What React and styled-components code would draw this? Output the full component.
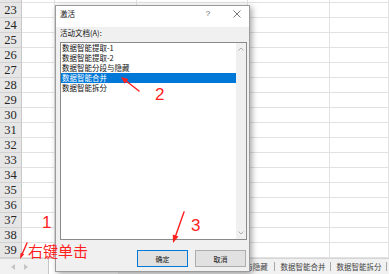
import React from 'react';
import styled, { createGlobalStyle } from 'styled-components';

const GlobalStyle = createGlobalStyle`
    html, body {
        margin: 0;
        padding: 0;
        background: #fff;
    }
    body {
        font-family: "Noto Sans CJK SC", "Noto Sans", sans-serif;
    }
`;

const Page = styled.div`
    position: relative;
    width: 389px;
    height: 274px;
    overflow: hidden;
    display: flex;
    flex-direction: column;
`;

const Sheet = styled.div`
    flex: 1;
    overflow: hidden;
`;

const Rows = styled.div`
    margin-top: -12px;
`;

const Row = styled.div`
    display: grid;
    grid-template-columns: 22px 33px 82px 111px 82px 1fr;
    height: 15px;
`;

const RowHead = styled.div`
    box-sizing: border-box;
    background: #e6e6e6;
    border-right: 1px solid #c9c9c9;
    border-bottom: 1px solid #d2d2d2;
    display: flex;
    align-items: center;
    justify-content: center;
    font: normal 12.5px/14px "Liberation Serif", serif;
    color: #262626;
`;

const Cell = styled.div`
    box-sizing: border-box;
    border-right: 1px solid #e2e2e2;
    border-bottom: 1px solid #e2e2e2;
`;

const TabBar = styled.div`
    height: 16px;
    box-sizing: border-box;
    display: flex;
    background: #f1f1f1;
    border-top: 1px solid #d6d6d6;
`;

const TabNav = styled.div`
    flex: 0 0 48px;
    display: flex;
    align-items: center;
    gap: 9px;
    padding-left: 11px;
    box-sizing: border-box;
`;

const Tab = styled.div`
    position: relative;
    flex: 0 0 ${p => p.$w}px;
    display: flex;
    align-items: center;
    justify-content: center;
    font-size: 7.5px;
    white-space: nowrap;
    overflow: hidden;
    color: ${p => (p.$active ? '#217346' : '#444')};
    background: ${p => (p.$active ? '#fff' : 'transparent')};
    border-left: ${p => (p.$active ? '1px solid #c6c6c6' : 'none')};
    box-sizing: border-box;

    &::after {
        content: '';
        position: absolute;
        right: 0;
        top: 3px;
        bottom: 3px;
        width: 1px;
        background: #a8a8a8;
    }
`;

const Dialog = styled.div`
    position: absolute;
    left: 55px;
    top: 5px;
    width: 195px;
    height: 267px;
    box-sizing: border-box;
    border: 1px solid #9c9c9c;
    background: #f0f0f0;
    box-shadow: 2px 2px 6px rgba(0, 0, 0, 0.35);
    display: flex;
    flex-direction: column;
`;

const TitleBar = styled.div`
    height: 21px;
    flex: none;
    background: #fff;
    display: flex;
    align-items: flex-start;
    padding: 3px 0 0 4px;
    box-sizing: border-box;
`;

const Title = styled.span`
    flex: 1;
    font-size: 7.5px;
    line-height: 10px;
    color: #111;
`;

const TitleButtons = styled.div`
    display: flex;
    gap: 5px;
`;

const TitleButton = styled.span`
    width: 24px;
    height: 10px;
    display: flex;
    align-items: center;
    justify-content: center;
    font: normal 8px/10px "Liberation Sans", sans-serif;
    color: #666;
`;

const Body = styled.div`
    flex: 1;
    display: flex;
    flex-direction: column;
    padding: 1px 2px 4px 4px;
`;

const Label = styled.div`
    font-size: 7.5px;
    line-height: 10px;
    height: 10px;
    color: #111;
    margin-bottom: 4px;
`;

const ListBox = styled.div`
    width: 187px;
    height: 198px;
    box-sizing: border-box;
    border: 1px solid #8a8a8a;
    background: #fff;
    display: flex;
`;

const Items = styled.div`
    flex: 1;
`;

const Item = styled.div`
    height: 10px;
    line-height: 10px;
    font-size: 7.5px;
    padding-left: 1px;
    white-space: nowrap;
    color: ${p => (p.$selected ? '#fff' : '#111')};
    background: ${p => (p.$selected ? '#0078d7' : 'transparent')};
`;

const ScrollBar = styled.div`
    width: 10px;
    background: #f0f0f0;
    display: flex;
    flex-direction: column;
    justify-content: space-between;
    align-items: center;
    padding: 4px 0;
    box-sizing: border-box;
`;

const Buttons = styled.div`
    margin-top: 10px;
    margin-right: 1px;
    display: flex;
    justify-content: flex-end;
    gap: 7px;
`;

const Button = styled.div`
    width: 51px;
    height: 17px;
    box-sizing: border-box;
    background: #e1e1e1;
    border: 1px solid ${p => (p.$primary ? '#0078d7' : '#adadad')};
    display: flex;
    align-items: center;
    justify-content: center;
    font-size: 7px;
    color: #111;
`;

const Overlay = styled.svg`
    position: absolute;
    left: 0;
    top: 0;
    pointer-events: none;
`;

const Note = styled.span`
    position: absolute;
    left: ${p => p.$x}px;
    top: ${p => p.$y}px;
    font-size: ${p => p.$size}px;
    line-height: ${p => p.$size}px;
    font-family: ${p => (p.$cjk ? '"Noto Sans CJK SC", sans-serif' : '"Liberation Sans", sans-serif')};
    color: #ff1f1f;
    white-space: nowrap;
`;

const rows = Array.from({ length: 18 }, (_, i) => 22 + i);
const tabs = [
    { name: '数据智能提取-1', w: 70, active: true },
    { name: '数据智能提取-2', w: 75 },
    { name: '数据智能分段与隐藏', w: 82 },
    { name: '数据智能合并', w: 56 },
    { name: '数据智能拆分', w: 56 },
];
const docs = ['数据智能提取-1', '数据智能提取-2', '数据智能分段与隐藏', '数据智能合并', '数据智能拆分'];

const Chevron = ({ up }) => (
    <svg width="6" height="4" viewBox="0 0 6 4">
        <path d={up ? 'M0.5 3.5 L3 1 L5.5 3.5' : 'M0.5 0.5 L3 3 L5.5 0.5'} fill="none" stroke="#a6a6a6" strokeWidth="0.9" />
    </svg>
);

const NavArrow = ({ right }) => (
    <svg width="4" height="6" viewBox="0 0 4 6">
        <path d={right ? 'M0 0 L4 3 L0 6 Z' : 'M4 0 L0 3 L4 6 Z'} fill="#c4c4c4" />
    </svg>
);

const App = () => (
    <Page>
        <GlobalStyle />
        <Sheet>
            <Rows>
                {rows.map(n => (
                    <Row key={n}>
                        <RowHead>{n}</RowHead>
                        <Cell /><Cell /><Cell /><Cell /><Cell />
                    </Row>
                ))}
            </Rows>
        </Sheet>
        <TabBar>
            <TabNav>
                <NavArrow />
                <NavArrow right />
            </TabNav>
            {tabs.map(t => (
                <Tab key={t.name} $w={t.w} $active={t.active}>{t.name}</Tab>
            ))}
        </TabBar>

        <Dialog>
            <TitleBar>
                <Title>激活</Title>
                <TitleButtons>
                    <TitleButton>?</TitleButton>
                    <TitleButton>
                        <svg width="8" height="8" viewBox="0 0 8 8">
                            <path d="M0.5 0.5 L7.5 7.5 M7.5 0.5 L0.5 7.5" stroke="#555" strokeWidth="0.8" />
                        </svg>
                    </TitleButton>
                </TitleButtons>
            </TitleBar>
            <Body>
                <Label>活动文档(A):</Label>
                <ListBox>
                    <Items>
                        {docs.map(d => (
                            <Item key={d} $selected={d === '数据智能合并'}>{d}</Item>
                        ))}
                    </Items>
                    <ScrollBar>
                        <Chevron up />
                        <Chevron />
                    </ScrollBar>
                </ListBox>
                <Buttons>
                    <Button $primary>确定</Button>
                    <Button>取消</Button>
                </Buttons>
            </Body>
        </Dialog>

        <Overlay width="389" height="274" viewBox="0 0 389 274">
            <g stroke="#ff1f1f" strokeWidth="1.4" fill="#ff1f1f" strokeLinecap="round">
                <line x1="27" y1="243" x2="22.4" y2="253.5" />
                <polygon points="20,259 24.2,254.3 20.6,252.7" stroke="none" />
                <line x1="139" y1="91" x2="126.5" y2="81.3" />
                <polygon points="121,77 128.3,78.9 124.7,83.7" stroke="none" />
                <line x1="184" y1="212" x2="175.7" y2="235.5" />
                <polygon points="173,243 178.5,236.5 172.8,234.5" stroke="none" />
            </g>
        </Overlay>
        <Note $x={42} $y={214} $size={17}>1</Note>
        <Note $x={155} $y={86} $size={17}>2</Note>
        <Note $x={191} $y={217} $size={17}>3</Note>
        <Note $x={28} $y={243} $size={15} $cjk>右键单击</Note>
    </Page>
);

export default App;
